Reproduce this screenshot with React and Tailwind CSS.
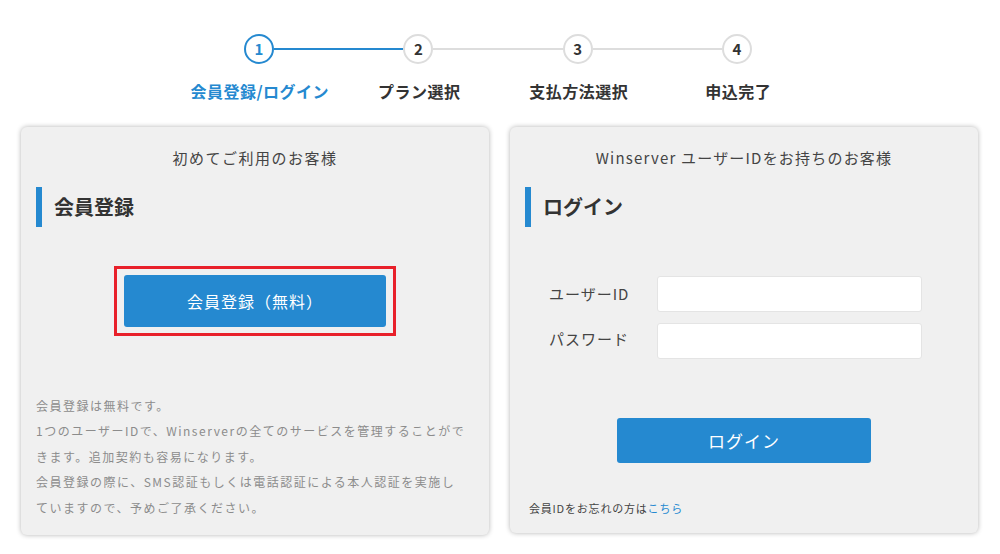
const steps = ["会員登録/ログイン", "プラン選択", "支払方法選択", "申込完了"];

const Stepper = () => {
  return (
    <div className="pt-[34px]">
      <div className="flex items-center w-[508px] ml-[244px]">
        {steps.map((s, i) => (
          <div key={s} className={i < 3 ? "flex items-center flex-1" : "flex items-center"}>
            <div
              className={
                i === 0
                  ? "w-[30px] h-[30px] rounded-full border-2 border-[#2589d0] bg-white flex items-center justify-center text-[15px] font-bold text-[#2589d0]"
                  : "w-[30px] h-[30px] rounded-full border-2 border-[#dddddd] bg-white flex items-center justify-center text-[15px] font-bold text-[#333]"
              }
            >
              {i + 1}
            </div>
            {i < 3 && (
              <div className={i === 0 ? "flex-1 h-[2px] bg-[#2589d0]" : "flex-1 h-[2px] bg-[#dddddd]"} />
            )}
          </div>
        ))}
      </div>
      <div className="grid grid-cols-4 w-[638px] ml-[180px] mt-[16px]">
        {steps.map((s, i) => (
          <div
            key={s}
            className={
              i === 0
                ? "text-center text-[16px] leading-[22px] font-bold tracking-[0.5px] text-[#2589d0]"
                : "text-center text-[16px] leading-[22px] font-bold tracking-[0.5px] text-[#333]"
            }
          >
            {s}
          </div>
        ))}
      </div>
    </div>
  );
};

const Heading = ({ children }) => (
  <div className="flex items-center h-[40px] mt-[19px]">
    <div className="w-[6px] h-[40px] bg-[#2589d0]" />
    <h2 className="ml-[12px] text-[20px] font-bold text-[#333] leading-none">{children}</h2>
  </div>
);

const App = () => {
  return (
    <div className="w-[1000px] h-[554px] bg-white font-['Noto_Sans_CJK_JP','Noto_Sans',sans-serif] overflow-hidden">
      <Stepper />

      <div className="flex gap-[21px] px-[21px] mt-[25px]">
        {/* 新規 */}
        <div className="w-[468px] h-[408px] bg-[#f0f0f0] rounded-md shadow-[0_0_5px_rgba(0,0,0,0.3)] px-[15px] flex flex-col">
          <p className="pt-[21px] text-center text-[15px] leading-[20px] text-[#444] tracking-[1.5px]">
            初めてご利用のお客様
          </p>
          <Heading>会員登録</Heading>
          <div className="flex justify-center mt-[39px]">
            <div className="border-[3px] border-[#e8202a] px-[7px] py-[6px]">
              <button className="w-[262px] h-[52px] bg-[#2589d0] rounded-[3px] text-white text-[16px] tracking-[1px]">
                会員登録（無料）
              </button>
            </div>
          </div>
          <div className="mt-auto pb-[15px] pr-[6px] text-[12px] leading-[25.5px] text-[#8c8c8c] tracking-[1.5px]">
            <p>会員登録は無料です。</p>
            <p>1つのユーザーIDで、Winserverの全てのサービスを管理することができます。追加契約も容易になります。</p>
            <p>会員登録の際に、SMS認証もしくは電話認証による本人認証を実施していますので、予めご了承ください。</p>
          </div>
        </div>

        {/* ログイン */}
        <div className="w-[468px] h-[406px] bg-[#f0f0f0] rounded-md shadow-[0_0_5px_rgba(0,0,0,0.3)] px-[15px] flex flex-col">
          <p className="pt-[21px] text-center text-[15px] leading-[20px] text-[#444] tracking-[1.2px]">
            Winserver ユーザーIDをお持ちのお客様
          </p>
          <Heading>ログイン</Heading>
          <div className="mt-[49px] flex flex-col gap-[11px]">
            <div className="flex items-center">
              <label className="w-[132px] pl-[24px] text-[15px] text-[#444] tracking-[1px]">ユーザーID</label>
              <input className="w-[265px] h-[36px] bg-white rounded-[3px] border border-[#e4e4e4] outline-none px-2" />
            </div>
            <div className="flex items-center">
              <label className="w-[132px] pl-[24px] pb-[4px] text-[15px] text-[#444] tracking-[1px]">パスワード</label>
              <input type="password" className="w-[265px] h-[36px] bg-white rounded-[3px] border border-[#e4e4e4] outline-none px-2" />
            </div>
          </div>
          <div className="flex justify-center mt-[59px]">
            <button className="w-[254px] h-[45px] bg-[#2589d0] rounded-[3px] text-white text-[17px] tracking-[1px]">
              ログイン
            </button>
          </div>
          <p className="mt-auto pb-[17px] pl-[4px] text-[11px] text-[#444] tracking-[0.8px]">
            会員IDをお忘れの方は<a href="#" className="text-[#2589d0]">こちら</a>
          </p>
        </div>
      </div>
    </div>
  );
};

export default App;
